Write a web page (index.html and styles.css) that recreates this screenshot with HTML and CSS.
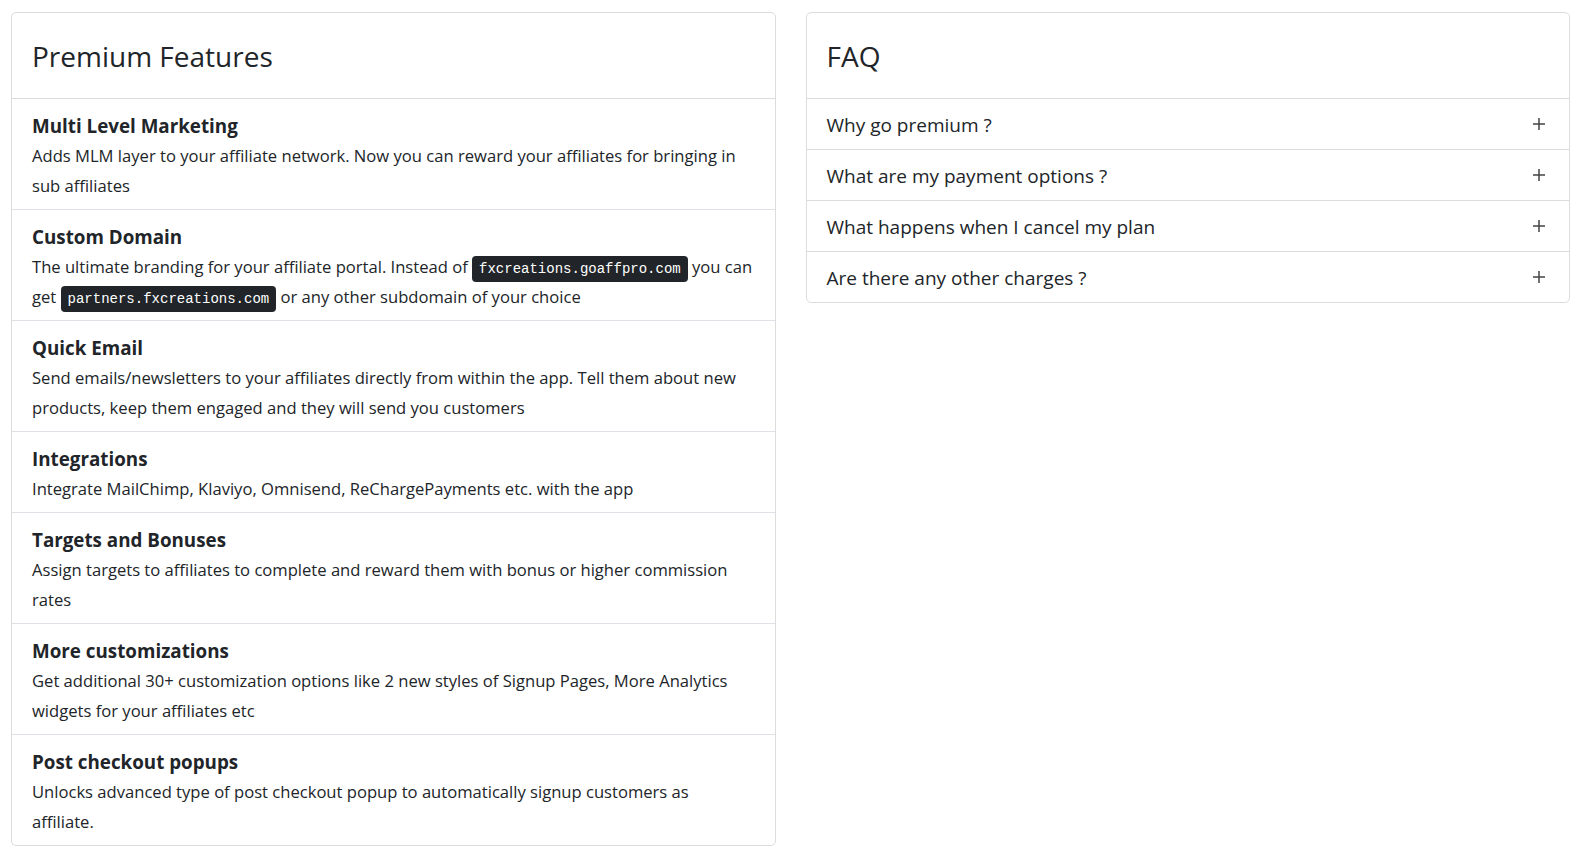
FILE: index.html
```html
<!DOCTYPE html>
<html>
<head>
<meta charset="utf-8">
<link rel="stylesheet" href="styles.css">
</head>
<body>
<div class="page">
  <div class="card">
    <div class="card-header"><h3>Premium Features</h3></div>
    <div class="item">
      <div class="item-title">Multi Level Marketing</div>
      <div class="item-text">Adds MLM layer to your affiliate network. Now you can reward your affiliates for bringing in sub affiliates</div>
    </div>
    <div class="item">
      <div class="item-title">Custom Domain</div>
      <div class="item-text">The ultimate branding for your affiliate portal. Instead of <code>fxcreations.goaffpro.com</code> you can get <code>partners.fxcreations.com</code> or any other subdomain of your choice</div>
    </div>
    <div class="item">
      <div class="item-title">Quick Email</div>
      <div class="item-text">Send emails/newsletters to your affiliates directly from within the app. Tell them about new products, keep them engaged and they will send you customers</div>
    </div>
    <div class="item">
      <div class="item-title">Integrations</div>
      <div class="item-text">Integrate MailChimp, Klaviyo, Omnisend, ReChargePayments etc. with the app</div>
    </div>
    <div class="item">
      <div class="item-title">Targets and Bonuses</div>
      <div class="item-text">Assign targets to affiliates to complete and reward them with bonus or higher commission rates</div>
    </div>
    <div class="item">
      <div class="item-title">More customizations</div>
      <div class="item-text">Get additional 30+ customization options like 2 new styles of Signup Pages, More Analytics widgets for your affiliates etc</div>
    </div>
    <div class="item">
      <div class="item-title">Post checkout popups</div>
      <div class="item-text">Unlocks advanced type of post checkout popup to automatically signup customers as affiliate.</div>
    </div>
  </div>
  <div class="card faq">
    <div class="card-header"><h3>FAQ</h3></div>
    <div class="q"><span>Why go premium ?</span><svg class="plus" viewBox="0 0 12 12"><path d="M6 0v12M0 6h12"/></svg></div>
    <div class="q"><span>What are my payment options ?</span><svg class="plus" viewBox="0 0 12 12"><path d="M6 0v12M0 6h12"/></svg></div>
    <div class="q"><span>What happens when I cancel my plan</span><svg class="plus" viewBox="0 0 12 12"><path d="M6 0v12M0 6h12"/></svg></div>
    <div class="q"><span>Are there any other charges ?</span><svg class="plus" viewBox="0 0 12 12"><path d="M6 0v12M0 6h12"/></svg></div>
  </div>
</div>
</body>
</html>
```
FILE: styles.css
```css
* { box-sizing: border-box; }
body {
  margin: 0;
  font-family: "Open Sans", "Noto Sans", sans-serif;
  color: #212529;
  background: #fff;
}
.page {
  display: grid;
  grid-template-columns: 1fr 1fr;
  column-gap: 30px;
  align-items: start;
  padding: 12px 8px 0 11px;
}
.card {
  border: 1px solid #dcdcdc;
  border-radius: 5px;
  background: #fff;
}
.card-header {
  padding: 21px 20px 19px;
  border-bottom: 1px solid #dcdcdc;
}
.card-header h3 {
  margin: 0;
  font-weight: 400;
  font-size: 28px;
  line-height: 45px;
}
.item {
  padding: 12px 20px 8px;
  border-bottom: 1px solid #dee2e6;
}
.item:last-child { border-bottom: 0; }
.item-title {
  font-weight: 700;
  font-size: 18.8px;
  line-height: 30px;
}
.item-text {
  font-size: 16.6px;
  line-height: 30px;
}
code {
  font-family: "Liberation Mono", "DejaVu Sans Mono", monospace;
  font-size: 14px;
  line-height: 1;
  background: #212529;
  color: #fff;
  border-radius: 4px;
  padding: 5px 7px;
}
.q {
  display: flex;
  align-items: center;
  justify-content: space-between;
  padding: 11px 24px 9px 20px;
  font-size: 19px;
  line-height: 30px;
  border-bottom: 1px solid #dcdcdc;
}
.q:last-child { border-bottom: 0; }
.plus {
  width: 12px;
  height: 12px;
  margin-top: -2px;
  stroke: #444;
  stroke-width: 1.5;
  fill: none;
}
```
